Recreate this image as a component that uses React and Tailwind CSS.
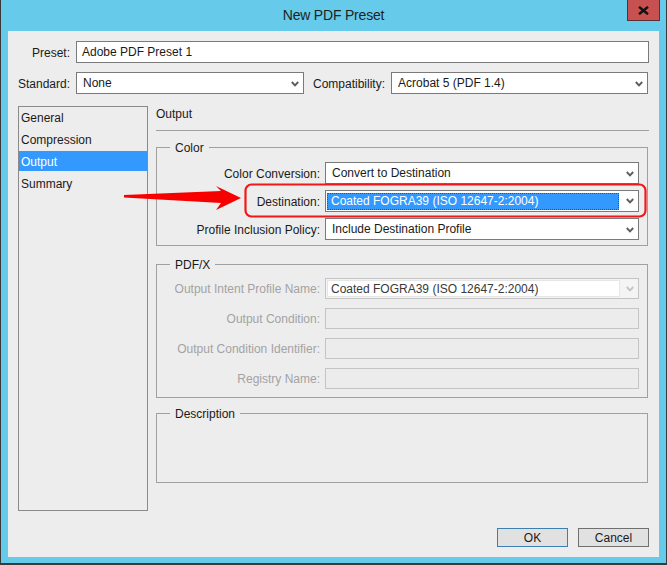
import React from "react";

function Chevron({ color = "#5c5c5c" }) {
  return (
    <svg width="8" height="6" viewBox="0 0 8 6" className="shrink-0">
      <path d="M0.8 1 L4 4.3 L7.2 1" stroke={color} strokeWidth="1.9" fill="none" />
    </svg>
  );
}

function Select({ children, className = "" }) {
  return (
    <div className={`h-[22px] border border-[#7a7a7a] bg-white flex items-center pl-[6px] pr-[4px] pt-[1px] ${className}`}>
      <span className="flex-1 whitespace-nowrap overflow-hidden">{children}</span>
      <Chevron />
    </div>
  );
}

function Group({ title, children }) {
  return (
    <fieldset className="border border-[#a0a0a0] mr-[1px]">
      <legend className="ml-[13px] px-[5px] leading-[16px] pt-[1px] text-[#1a1a1a]">{title}</legend>
      {children}
    </fieldset>
  );
}

function Row({ label, disabled, children, h = "h-[22px]" }) {
  return (
    <div className={`flex items-center ${h}`}>
      <div className={`w-[163px] pt-[2px] text-right whitespace-nowrap ${disabled ? "text-[#a3a3a3]" : "text-[#1a1a1a]"}`}>{label}</div>
      <div className="ml-[5px] flex-1 h-full">{children}</div>
    </div>
  );
}

function DisabledBox() {
  return <div className="h-full border border-[#c4c4c4] bg-[#ececec]" />;
}

export default function App() {
  return (
    <div className="relative w-[667px] h-[565px] bg-[#66cbea] px-[8px] pb-[8px] flex flex-col font-['Liberation_Sans',Arial,sans-serif] text-[12px] leading-[15px] text-[#1a1a1a] shadow-[inset_1px_0_0_#3a3a3a,inset_-1px_0_0_#3a3a3a,inset_0_-2px_0_#3a3a3a] overflow-hidden">
      {/* Title bar */}
      <div className="h-[31px] flex items-center justify-center text-[14px] tracking-[-0.2px] text-[#1e1e1e]">
        New PDF Preset
      </div>

      {/* Client area */}
      <div className="h-[526px] bg-[#ededed] px-[10px] pt-[10px] flex flex-col">
        {/* Preset row */}
        <div className="flex items-center h-[22px]">
          <div className="w-[52px] pt-[2px] text-right">Preset:</div>
          <div className="ml-[6px] flex-1 h-full border border-[#7a7a7a] bg-white flex items-center pl-[5px] pt-[1px]">
            Adobe PDF Preset 1
          </div>
        </div>

        {/* Standard / Compatibility */}
        <div className="flex items-center h-[22px] mt-[9px]">
          <div className="w-[52px] pt-[2px] text-right">Standard:</div>
          <Select className="ml-[6px] w-[228px]">None</Select>
          <div className="ml-[9px] pt-[2px] whitespace-nowrap">Compatibility:</div>
          <Select className="ml-[6px] flex-1 mr-[1px]">Acrobat 5 (PDF 1.4)</Select>
        </div>

        {/* Body */}
        <div className="flex mt-[12px]">
          {/* Left list */}
          <div className="w-[130px] h-[405px] border border-[#8a8a8a] flex flex-col gap-[2px]">
            <div className="h-[20px] flex items-center pl-[2px] pt-[2px]">General</div>
            <div className="h-[20px] flex items-center pl-[2px] pt-[2px]">Compression</div>
            <div className="h-[20px] flex items-center pl-[2px] pt-[2px] bg-[#3399ff] text-white">Output</div>
            <div className="h-[20px] flex items-center pl-[2px] pt-[2px]">Summary</div>
          </div>

          {/* Right panel */}
          <div className="ml-[8px] flex-1 flex flex-col">
            <div className="h-[15px] pt-[1px]">Output</div>
            <div className="mt-[9px] h-px bg-[#a0a0a0]" />

            <div className="mt-[8px]">
              <Group title="Color">
                <div className="pt-[6px] pb-[5px] pr-[8px] flex flex-col gap-[6px]">
                  <Row label="Color Conversion:">
                    <Select>Convert to Destination</Select>
                  </Row>
                  <Row label="Destination:">
                    <div className="h-[22px] border border-[#7a7a7a] bg-white flex items-center pl-[1px] pr-[4px]">
                      <span className="w-[292px] h-[17px] bg-[#3399ff] text-white border border-dotted border-[#6b4a10] pl-[3px] leading-[15px] whitespace-nowrap">
                        Coated FOGRA39 (ISO 12647-2:2004)
                      </span>
                      <span className="flex-1" />
                      <Chevron />
                    </div>
                  </Row>
                  <Row label="Profile Inclusion Policy:">
                    <Select>Include Destination Profile</Select>
                  </Row>
                </div>
              </Group>
            </div>

            <div className="mt-[10px]">
              <Group title="PDF/X">
                <div className="pt-[5px] pb-[8px] pr-[8px] flex flex-col gap-[9px]">
                  <Row label="Output Intent Profile Name:" disabled h="h-[21px]">
                    <div className="h-full border border-[#c4c4c4] bg-[#f4f4f4] flex items-center p-[1px] pr-[4px]">
                      <div className="w-[293px] h-full bg-white border border-[#e6e6e6] flex items-center pl-[3px] pt-[1px] text-[#3a3a3a] whitespace-nowrap">
                        Coated FOGRA39 (ISO 12647-2:2004)
                      </div>
                      <span className="flex-1" />
                      <Chevron color="#c4c4c4" />
                    </div>
                  </Row>
                  <Row label="Output Condition:" disabled h="h-[21px]">
                    <DisabledBox />
                  </Row>
                  <Row label="Output Condition Identifier:" disabled h="h-[21px]">
                    <DisabledBox />
                  </Row>
                  <Row label="Registry Name:" disabled h="h-[21px]">
                    <DisabledBox />
                  </Row>
                </div>
              </Group>
            </div>

            <div className="mt-[7px]">
              <Group title="Description">
                <div className="h-[60px]" />
              </Group>
            </div>
          </div>
        </div>

        {/* Buttons */}
        <div className="mt-[17px] flex justify-end gap-[10px]">
          <button className="w-[71px] h-[19px] border border-[#3c7fb1] bg-[#e1e1e1] text-[12px] leading-[15px] pt-[1px] text-[#1a1a1a]">OK</button>
          <button className="w-[71px] h-[19px] border border-[#707070] bg-[#e1e1e1] text-[12px] leading-[15px] pt-[1px] text-[#1a1a1a]">Cancel</button>
        </div>
      </div>

      {/* Close button */}
      <div className="absolute top-0 left-[627px] w-[33px] h-[21px] bg-[#c75050] border border-t-0 border-[#5a3030] flex items-center justify-center">
        <svg width="11" height="9" viewBox="0 0 11 9">
          <path d="M1 0.8 L10 8.2 M10 0.8 L1 8.2" stroke="#111" strokeWidth="2.4" />
        </svg>
      </div>

      {/* Annotation overlay */}
      <svg className="absolute left-0 top-0 pointer-events-none" width="667" height="565" viewBox="0 0 667 565">
        <rect x="245.5" y="184.5" width="400" height="32" rx="6" ry="6" fill="none" stroke="#f01818" strokeWidth="2.2" />
        <polygon points="124,195 221,191 216,186 241,198 216,210 221,203 124,197.6" fill="#f80000" />
      </svg>
    </div>
  );
}
